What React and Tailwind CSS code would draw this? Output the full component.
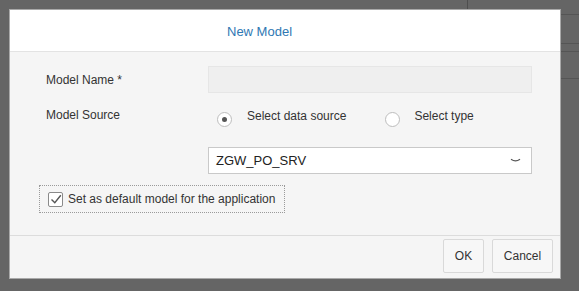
export default function App() {
  return (
    <div
      className="relative w-[579px] h-[291px] bg-[#656565] overflow-hidden pl-[9px] pt-[9px]"
      style={{ fontFamily: '"Liberation Sans", Arial, sans-serif' }}
    >
      {/* underlying page hints */}
      <div className="absolute left-[467px] top-0 h-[9px] w-px bg-[#4e4e4e]" />
      <div className="absolute left-[561px] top-[14px] w-[18px] h-px bg-[#555]" />
      <div className="absolute left-[561px] top-[43px] w-[18px] h-px bg-[#555]" />
      <div className="absolute left-[561px] top-[51px] w-[18px] h-px bg-[#555]" />
      <div className="absolute left-[561px] top-[78px] w-[18px] h-px bg-[#555]" />

      <div className="relative w-[552px] h-[270px] bg-[#f5f5f5] border border-[#a9a9a9] flex flex-col">
        <div className="h-[42px] shrink-0 bg-white border-b border-[#e3e3e3] flex items-center pl-[217px] pt-[2px]">
          <span className="text-[13px] text-[#2f78b3]">New Model</span>
        </div>

        <div className="flex-1 flex flex-col pl-[36px] pr-[28px] text-[12px] text-[#333]">
          <div className="flex items-center mt-[14px] h-[27px]">
            <span className="w-[162px]">Model Name *</span>
            <div className="flex-1 h-[27px] bg-[#efefef] border border-[#e6e6e6]" />
          </div>

          <div className="flex items-center mt-[10px] h-[28px]">
            <span className="w-[162px] -mt-[4px]">Model Source</span>
            <div className="flex items-center">
              <span className="ml-[9px] w-[15px] h-[15px] rounded-full border border-[#bdbdbd] bg-white flex items-center justify-center mt-[4px]">
                <span className="w-[5px] h-[5px] rounded-full bg-[#555]" />
              </span>
              <span className="ml-[15px] -mt-[3px]">Select data source</span>
              <span className="ml-[39px] w-[15px] h-[15px] rounded-full border border-[#bdbdbd] bg-white mt-[4px]" />
              <span className="ml-[14px] -mt-[3px]">Select type</span>
            </div>
          </div>

          <div className="flex mt-[16px]">
            <div className="ml-[162px] flex-1 h-[27px] bg-white border border-[#c9c9c9] flex items-center justify-between pl-[7px] pr-[10px]">
              <span className="text-[13px] text-[#222]">ZGW_PO_SRV</span>
              <svg width="11" height="5" viewBox="0 0 11 5">
                <path d="M1 1.2 Q5.5 4.5 10 1.2" fill="none" stroke="#555" strokeWidth="1.2" />
              </svg>
            </div>
          </div>

          <div className="mt-[11px] -ml-[7px] w-[246px] h-[28px] border border-dotted border-[#9a9a9a] flex items-center pl-[8px]">
            <span className="shrink-0 w-[15px] h-[15px] rounded-[2px] border border-[#8a8a8a] bg-white flex items-center justify-center">
              <svg width="12" height="11" viewBox="0 0 12 11">
                <path d="M1.5 5.5 L4.8 8.8 L10.8 1.2" fill="none" stroke="#555" strokeWidth="1.4" />
              </svg>
            </span>
            <span className="ml-[5px] whitespace-nowrap text-[12px] text-[#333]">Set as default model for the application</span>
          </div>
        </div>

        <div className="h-[43px] shrink-0 border-t border-[#dcdcdc] flex justify-end items-start pt-[3px] pr-[7px] gap-[8px]">
          <button className="w-[41px] h-[34px] bg-[#f7f7f7] border border-[#d9d9d9] rounded-[2px] text-[12px] text-[#333]">OK</button>
          <button className="w-[61px] h-[34px] bg-[#f7f7f7] border border-[#d9d9d9] rounded-[2px] text-[12px] text-[#333]">Cancel</button>
        </div>
      </div>
    </div>
  );
}
